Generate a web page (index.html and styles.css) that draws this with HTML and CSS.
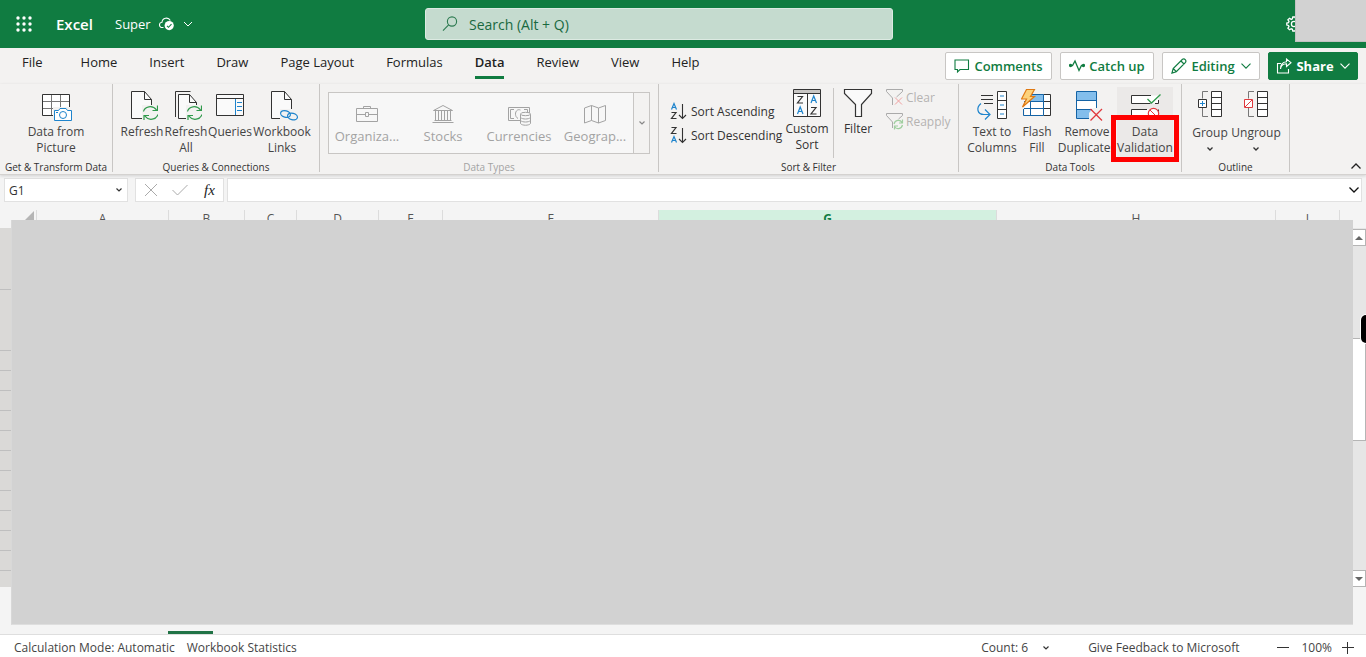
FILE: index.html
```html
<!DOCTYPE html>
<html lang="en">
<head>
<meta charset="utf-8">
<meta name="viewport" content="width=device-width, initial-scale=1">
<title>Excel</title>
<link rel="stylesheet" href="styles.css">
</head>
<body>
<div class="app">
  <header class="topbar">
    <button class="launcher" aria-label="App launcher">
      <svg width="16" height="16" viewBox="0 0 16 16" fill="#fff"><circle cx="2" cy="2" r="1.7"/><circle cx="8" cy="2" r="1.7"/><circle cx="14" cy="2" r="1.7"/><circle cx="2" cy="8" r="1.7"/><circle cx="8" cy="8" r="1.7"/><circle cx="14" cy="8" r="1.7"/><circle cx="2" cy="14" r="1.7"/><circle cx="8" cy="14" r="1.7"/><circle cx="14" cy="14" r="1.7"/></svg>
    </button>
    <span class="brand">Excel</span>
    <button class="doc">Super
      <svg width="16" height="16" viewBox="0 0 16 16" fill="none"><path d="M4.5 11.5H3.2A2.6 2.6 0 0 1 3 6.3 4.4 4.4 0 0 1 11.3 4.5" stroke="#fff" stroke-width="1.1"/><circle cx="10.2" cy="9.6" r="4.6" fill="#fff"/><path d="M8 9.8l1.5 1.5 3-3.2" stroke="#107c41" stroke-width="1.1"/></svg>
      <svg class="chev" width="10" height="6" viewBox="0 0 10 6" fill="none" stroke="#fff"><path d="M1 1l4 4 4-4"/></svg>
    </button>
    <label class="search">
      <svg width="16" height="16" viewBox="0 0 16 16" fill="none" stroke="#2c7a50" stroke-width="1.1"><circle cx="10" cy="5.5" r="4.6"/><path d="M6.6 8.9L1 14.6"/></svg>
      <input type="text" placeholder="Search (Alt + Q)" aria-label="Search">
    </label>
    <button class="gear" aria-label="Settings">
      <svg width="16" height="16" viewBox="0 0 16 16" fill="none" stroke="#fff" stroke-width="1.3"><path d="M6.8 1h2.4l.4 1.9 1.2.5 1.7-1.1 1.6 1.6L13 5.6l.5 1.2 1.7.4v2l-1.7.4-.5 1.3 1.1 1.6-1.6 1.6-1.7-1-1.2.4L9.200 15H6.800l-.4-1.800-1.200-.400-1.700 1-1.600-1.600L3 10.700l-.5-1.200L.8 9V7l1.700-.4L3 5.400 1.900 3.900l1.600-1.600 1.700 1.100 1.200-.5z"/><circle cx="8" cy="8" r="2.600"/></svg>
    </button>
    <div class="account-mask"></div>
  </header>

  <div class="tabrow">
    <nav class="tabs">
      <button class="tab file">File</button><button class="tab">Home</button><button class="tab">Insert</button><button class="tab">Draw</button><button class="tab">Page Layout</button><button class="tab">Formulas</button><button class="tab active">Data</button><button class="tab">Review</button><button class="tab">View</button><button class="tab">Help</button>
    </nav>
    <div class="actions">
      <button class="action comments"><svg width="16" height="16" viewBox="0 0 16 16" fill="none" stroke="#107c41" stroke-width="1.100"><path d="M1 2h13.500v9.500H6L3.500 14v-2.500H1z"/></svg>Comments</button>
      <button class="action catch"><svg width="16" height="16" viewBox="0 0 16 16" fill="none" stroke="#107c41" stroke-width="1.300"><path d="M1.500 7.500h2L6 3l4 9.500 2.500-5h2"/><circle cx="1.500" cy="7.500" r="1" fill="#107c41"/><circle cx="14.500" cy="7.500" r="1" fill="#107c41"/></svg>Catch up</button>
      <button class="action edit"><svg width="16" height="16" viewBox="0 0 16 16" fill="none" stroke="#107c41" stroke-width="1.200"><path d="M1 15l1.200-4.500L11.500 1.300c2-1.300 4.300 1 3 3L5.300 13.700z M2.200 10.500l3.100 3.200M10 3l3 3"/></svg>Editing<svg class="chev" width="10" height="6" viewBox="0 0 10 6" fill="none" stroke="#107c41" stroke-width="1.100"><path d="M.5 .7L5 5.200 9.500.7"/></svg></button>
      <button class="action share"><svg width="16" height="16" viewBox="0 0 16 16" fill="none" stroke="#fff" stroke-width="1.100"><path d="M5 5.500H1.500V15h11v-4M4.500 11c.4-3.500 2.600-5.200 6-5.300v2.800L15 4.700 10.500 1v2.700C6.500 4 4.500 6.500 4.500 11z"/></svg>Share<svg class="chev" width="10" height="6" viewBox="0 0 10 6" fill="none" stroke="#fff" stroke-width="1.100"><path d="M.5 .7L5 5.200 9.500.7"/></svg></button>
    </div>
  </div>

  <div class="ribbon">
    <section class="group g-get">
      <div class="cmds">
        <button class="cmd">
          <svg width="32" height="32" viewBox="0 0 32 32" fill="none"><path d="M2.500 5.500h27v21h-27z" fill="#fff"/><path d="M11.500 5.500v21M20.500 5.500v21M2.500 12.500h27M2.500 19.500h27" stroke="#777"/><path d="M2.500 5.500h27v21h-27z" stroke="#333"/><path d="M13 18h19v14H13z" fill="#f3f2f1"/><path d="M14.500 21.500h4l1.500-2h6l1.500 2h4v10h-17z" fill="#fff" stroke="#1e84cc"/><circle cx="23" cy="26" r="3.500" stroke="#1e84cc"/><path d="M16 23.500h2" stroke="#1e84cc"/></svg>
          <span>Data from<br>Picture</span></button>
      </div>
      <h2>Get &amp; Transform Data</h2>
    </section>

    <section class="group g-queries">
      <div class="cmds">
        <button class="cmd w44">
          <svg width="32" height="32" viewBox="0 0 32 32" fill="none"><path d="M5.500 2.500h13l7 8v19h-20z" fill="#fafafa" stroke="#333"/><path d="M18.500 2.500v8h7" stroke="#333"/><path d="M16 16h16v16H16z" fill="#f3f2f1"/><path d="M17.500 22.500c1-5 9-7 13-1.500M31.500 16.500V21.500h-5M32 25.500c-2 5-9 7-13 1.500M18 31v-4.500h5" stroke="#309a4c" stroke-width="1.200"/></svg>
          <span>Refresh</span></button>
        <button class="cmd w44">
          <svg width="32" height="32" viewBox="0 0 32 32" fill="none"><path d="M5.500 28V2.500h15" stroke="#333"/><path d="M8.500 5.500h11l7 8v16h-18z" fill="#fafafa" stroke="#333"/><path d="M19.500 5.500v8h7" stroke="#333"/><path d="M16 16h16v16H16z" fill="#f3f2f1"/><path d="M17.500 22.500c1-5 9-7 13-1.500M31.500 16.500V21.500h-5M32 25.500c-2 5-9 7-13 1.500M18 31v-4.500h5" stroke="#309a4c" stroke-width="1.200"/></svg>
          <span>Refresh<br>All</span></button>
        <button class="cmd w44">
          <svg width="32" height="32" viewBox="0 0 32 32" fill="none"><path d="M2.500 5.500h27v21h-27z" fill="#fafafa" stroke="#333"/><path d="M2.500 9.500h27" stroke="#333"/><path d="M21.500 10v16M23 13.500h5M23 17.500h5M23 21.500h5" stroke="#1e84cc"/></svg>
          <span>Queries</span></button>
        <button class="cmd w60">
          <svg width="32" height="32" viewBox="0 0 32 32" fill="none"><path d="M5.500 2.500h13l7 8v19h-20z" fill="#fafafa" stroke="#333"/><path d="M18.500 2.500v8h7" stroke="#333"/><path d="M14 20h18v12H14z" fill="#f3f2f1"/><g stroke="#1e84cc" stroke-width="1.200"><ellipse cx="19.500" cy="25" rx="5" ry="3.200" transform="rotate(15 19.500 25)"/><ellipse cx="26.500" cy="27.500" rx="5" ry="3.200" transform="rotate(15 26.500 27.500)"/></g></svg>
          <span>Workbook<br>Links</span></button>
      </div>
      <h2>Queries &amp; Connections</h2>
    </section>

    <section class="group g-types">
      <div class="gallery">
        <button class="type" disabled><svg width="24" height="24" viewBox="0 0 24 24" fill="none" stroke="#a3a3a3"><path d="M1.500 5.500h21v13h-21zM8.500 5.500v-2h7v2M1.500 11.500h9M13.500 11.500h9M10.500 9.500h3v4h-3z"/></svg>Organiza...</button>
        <button class="type" disabled><svg width="24" height="24" viewBox="0 0 24 24" fill="none" stroke="#a3a3a3"><path d="M2.500 7.500L12 2.500l9.500 5zM3.500 17.500h17M1.500 19.500h21M4.500 8v9M7.500 8v9M10.500 8v9M13.500 8v9M16.500 8v9M19.500 8v9"/></svg>Stocks</button>
        <button class="type" disabled><svg width="24" height="24" viewBox="0 0 24 24" fill="none" stroke="#a3a3a3"><path d="M1.500 4.500h21v13h-21zM7 6.500H3.500v9H7M17 6.500h3.500V9M13.500 7c-5-2-7 6-2.500 8.500"/><path d="M13.500 11v9.500c1.500 2.300 8.500 2.300 10 0V11" fill="#f7f7f7"/><ellipse cx="18.500" cy="11" rx="5" ry="1.700" fill="#f7f7f7"/><path d="M13.500 14.500c2 2 8 2 10 0M13.500 17.500c2 2 8 2 10 0"/></svg>Currencies</button>
        <button class="type" disabled><svg width="24" height="24" viewBox="0 0 24 24" fill="none" stroke="#a3a3a3"><path d="M1.500 5L8.500 2.500l7 2.500 7-2.500v15l-7 2.500-7-2.500-7 2.500zM8.500 2.500v15M15.500 5v15"/></svg>Geograp...</button>
        <button class="more" disabled aria-label="More data types"><svg width="6" height="4" viewBox="0 0 6 4" fill="none" stroke="#888" stroke-width="1.200"><path d="M.5.5L3 3 5.500.5"/></svg></button>
      </div>
      <h2 class="dim">Data Types</h2>
    </section>

    <section class="group g-sort">
      <div class="cmds">
        <div class="sorts">
          <button class="row"><svg width="18" height="18" viewBox="0 0 18 18" fill="none" stroke-width="1.200"><path d="M1.500 7.500l2.500-6 2.500 6M2.300 5.500h3.400" stroke="#1e84cc"/><path d="M1.500 10.500h4.500L1.500 16.500h5" stroke="#333"/><path d="M12.500 2v14.500M9 13l3.500 3.500L16 13" stroke="#333" stroke-width="1.100"/></svg>Sort Ascending</button>
          <button class="row"><svg width="18" height="18" viewBox="0 0 18 18" fill="none" stroke-width="1.200"><path d="M1.500 1.500h4.500L1.500 7.500h5" stroke="#333"/><path d="M1.500 16.500l2.500-6 2.500 6M2.300 14.500h3.400" stroke="#1e84cc"/><path d="M12.500 2v14.500M9 13l3.500 3.500L16 13" stroke="#333" stroke-width="1.100"/></svg>Sort Descending</button>
        </div>
        <button class="cmd high custom">
          <svg width="32" height="32" viewBox="0 0 32 32" fill="none"><path d="M2.500 3.500h27v27h-27z" fill="#fafafa" stroke="#333"/><path d="M3 4h26v3.500H3z" fill="#c8c6c4"/><path d="M2.500 7.500h27M16.500 8v22" stroke="#333"/><g stroke-width="1.200"><path d="M6.500 10.500h5L6.500 17h5.500M20 21.500h5L20 28h5.500" stroke="#333"/><path d="M6.500 28l2.700-7 2.800 7M7.500 25.500h3.500M20 17l2.700-7 2.800 7M21 14.500h3.500" stroke="#1e84cc"/></g></svg>
          <span>Custom<br>Sort</span></button>
        <div class="rule"></div>
        <button class="cmd high filter">
          <svg width="32" height="32" viewBox="0 0 32 32" fill="none"><path d="M2.500 3.500h27v4L19.500 18.500v12h-6v-12L2.500 7.500z" fill="#fafafa" stroke="#333" stroke-width="1.200"/></svg>
          <span>Filter</span></button>
        <div class="clears">
          <button class="row" disabled><svg width="18" height="18" viewBox="0 0 18 18" fill="none"><path d="M.5 1.500h16v2L10.500 9M6.500 17V10L.5 3.500v-2" stroke="#aaa"/><path d="M9 9.500l7 7M16 9.500l-7 7" stroke="#f1a0a0"/></svg>Clear</button>
          <button class="row" disabled><svg width="18" height="18" viewBox="0 0 18 18" fill="none"><path d="M.5 1.500h16v2L12.500 7M6.500 16V10L.5 3.500v-2" stroke="#aaa"/><path d="M8 12c1-4 6-5 8-1.500M16.500 7.500v3.500h-3.500M16.500 13c-1 4-6 5-8 1.500M8.500 17.500V14H12" stroke="#9fce9f" stroke-width="1.200"/></svg>Reapply</button>
        </div>
      </div>
      <h2>Sort &amp; Filter</h2>
    </section>

    <section class="group g-tools">
      <div class="cmds">
        <button class="cmd w50">
          <svg width="32" height="32" viewBox="0 0 32 32" fill="none"><path d="M5 6.500h12M5 10.500h12M8 14.500h9" stroke="#333"/><path d="M21.500 2.500h9v27h-9z" fill="#fff" stroke="#333"/><path d="M21.500 11.500h9M21.500 20.500h9" stroke="#333"/><path d="M24 7h4M24 16h4M24 25h4M5 14.500c-5 4-4 11 3 11h5M9 20.500l5 5-5 5" stroke="#1e84cc" stroke-width="1.200"/></svg>
          <span>Text to<br>Columns</span></button>
        <button class="cmd w40">
          <svg width="32" height="32" viewBox="0 0 32 32" fill="none"><path d="M3.500 5.500h26v21h-26z" fill="#fff"/><path d="M10 5.500h12v7H8z" fill="#83beec"/><path d="M22.500 5.500h7v21h-7M22.500 12.500h7M22.500 19.500h7" stroke="#333"/><path d="M2.500 26.500h20v-21h-13M3 19.500h19.500M3 12.500h19.500M9.500 13v13.500M2.500 20v6.500" stroke="#1463a5"/><path d="M5.500.5h8l-4 7h4L1.500 18l4-8h-5z" fill="#fcd27c" stroke="#e07912" stroke-width="1.200"/></svg>
          <span>Flash<br>Fill</span></button>
        <button class="cmd w60">
          <svg width="32" height="32" viewBox="0 0 32 32" fill="none"><path d="M5.500 2.500h20v27h-20z" fill="#fff" stroke="#1463a5"/><path d="M6 3h19v8H6zM6 21h19v8H6z" fill="#83beec"/><path d="M5.500 11.500h20M5.500 20.500h20" stroke="#1463a5"/><path d="M22 19h10v13H18v-8z" fill="#f3f2f1"/><path d="M19.500 20L31 31.500M31 20L19.500 31.500" stroke="#e0393e" stroke-width="1.300"/></svg>
          <span>Remove<br>Duplicates</span></button>
        <button class="cmd hovered">
          <svg width="32" height="32" viewBox="0 0 32 32" fill="none"><path d="M2.500 6.500h27v8h-27zM2.500 20.500h27v8h-27z" fill="#fff"/><path d="M22 6.500H2.500v8h19M26 14.500h3.500V11M18 20.500H2.500v8h16M29.500 20.500v8" stroke="#333"/><path d="M18.500 10l4 4L31.500 5.500" stroke="#309a4c" stroke-width="1.300"/><circle cx="24.500" cy="24.500" r="5.200" fill="#fff" stroke="#e0393e" stroke-width="1.200"/><path d="M21 21l7 7" stroke="#e0393e"/></svg>
          <span>Data<br>Validation</span>
          <i class="callout"></i></button>
      </div>
      <h2>Data Tools</h2>
    </section>

    <section class="group g-outline">
      <div class="cmds">
        <button class="cmd low w46">
          <svg width="32" height="32" viewBox="0 0 32 32" fill="none"><path d="M17.500 2.500h10v25h-10z" fill="#fff" stroke="#333"/><path d="M17.500 8.500h10M17.500 14.500h10M17.500 20.500h10" stroke="#333"/><path d="M14 2.500H8.500v7M8.500 19v8.500H14" stroke="#777"/><path d="M4.500 10.500h8v8h-8z" fill="#fff" stroke="#333"/><path d="M6 14.500h5M8.500 12v5" stroke="#1e84cc"/></svg>
          <span>Group</span><svg class="down" width="6" height="4" viewBox="0 0 6 4" fill="none" stroke="#333" stroke-width="1.300"><path d="M.5.5L3 3 5.500.5"/></svg></button>
        <button class="cmd low w46">
          <svg width="32" height="32" viewBox="0 0 32 32" fill="none"><path d="M17.500 2.500h10v25h-10z" fill="#fff" stroke="#333"/><path d="M17.500 8.500h10M17.500 14.500h10M17.500 20.500h10" stroke="#333"/><path d="M14 2.500H8.500v7M8.500 19v8.500H14" stroke="#777"/><path d="M4.500 10.500h8v8h-8z" fill="#fff" stroke="#e0393e"/><path d="M5 18l7-7" stroke="#e0393e"/></svg>
          <span>Ungroup</span><svg class="down" width="6" height="4" viewBox="0 0 6 4" fill="none" stroke="#333" stroke-width="1.300"><path d="M.5.5L3 3 5.500.5"/></svg></button>
      </div>
      <h2>Outline</h2>
    </section>
    <button class="collapse" aria-label="Collapse ribbon"><svg width="10" height="6" viewBox="0 0 10 6" fill="none" stroke="#222" stroke-width="1.300"><path d="M.5 5.500L5 1l4.500 4.500"/></svg></button>
  </div>

  <div class="formula">
    <div class="namebox"><input type="text" value="G1" aria-label="Name box"><svg width="6" height="4" viewBox="0 0 6 4" fill="none" stroke="#333" stroke-width="1.200"><path d="M.5.5L3 3 5.500.5"/></svg></div>
    <div class="fx">
      <button aria-label="Cancel"><svg width="16" height="14" viewBox="0 0 16 14" fill="none" stroke="#aaa"><path d="M2 1l12 12M14 1L2 13"/></svg></button>
      <button aria-label="Enter"><svg width="16" height="14" viewBox="0 0 16 14" fill="none" stroke="#aaa"><path d="M.5 7l5 5L15.500 2"/></svg></button>
      <button class="fn" aria-label="Insert function">fx</button>
    </div>
    <div class="bar"><input type="text" aria-label="Formula bar"><svg width="10" height="6" viewBox="0 0 10 6" fill="none" stroke="#111" stroke-width="1.300"><path d="M.5.5L5 5 9.500.5"/></svg></div>
  </div>

  <main class="sheet">
    <div class="cols">
      <div class="corner"><svg width="10" height="10" viewBox="0 0 10 10"><path d="M10 0v10H0z" fill="#b5b5b5"/></svg></div>
      <div class="col a">A</div><div class="col b">B</div><div class="col c">C</div><div class="col d">D</div><div class="col e">E</div><div class="col f">F</div><div class="col g">G</div><div class="col h">H</div><div class="col i">I</div>
    </div>
    <div class="body">
      <div class="rows"><i class="first"></i><i class="tall"></i><i></i><i></i><i></i><i></i><i></i><i></i><i></i><i></i><i></i><i></i><i></i></div>
      <div class="scroll">
        <button aria-label="Scroll up"><svg width="8" height="4" viewBox="0 0 8 4" fill="#666"><path d="M0 4l4-4 4 4z"/></svg></button>
        <div class="track"><div class="thumb"></div></div>
        <button aria-label="Scroll down"><svg width="8" height="4" viewBox="0 0 8 4" fill="#666"><path d="M0 0l4 4 4-4z"/></svg></button>
      </div>
    </div>
    <div class="sheettabs"><div class="marker"></div></div>
    <div class="mask"></div>
    <div class="handle"></div>
  </main>

  <footer class="status">
    <button>Calculation Mode: Automatic</button>
    <button class="stats">Workbook Statistics</button>
    <button class="count">Count: 6<svg width="6" height="4" viewBox="0 0 6 4" fill="none" stroke="#333" stroke-width="1.200"><path d="M.5.5L3 3 5.500.5"/></svg></button>
    <button class="feedback">Give Feedback to Microsoft</button>
    <button class="zoom" aria-label="Zoom out"><svg width="12" height="12" viewBox="0 0 12 12" stroke="#333"><path d="M0 5.500h12"/></svg></button>
    <button class="level">100%</button>
    <button class="zoom" aria-label="Zoom in"><svg width="12" height="12" viewBox="0 0 12 12" stroke="#333"><path d="M0 5.500h12M5.500 0v12"/></svg></button>
  </footer>
</div>
</body>
</html>
```
FILE: styles.css
```css
* { box-sizing: border-box; }
body { margin: 0; font-family: "Open Sans", "Noto Sans", sans-serif; font-size: 12px; color: #333; background: #f4f4f4; }
button { border: 0; padding: 0; margin: 0; background: none; font: inherit; color: inherit; white-space: nowrap; }
input { border: 0; padding: 0; margin: 0; background: none; font: inherit; color: inherit; outline: 0; min-width: 0; }
svg { display: block; flex: none; }
.app { min-height: 100vh; display: flex; flex-direction: column; overflow: hidden; }

.topbar { position: relative; display: flex; align-items: center; height: 48px; padding-left: 16px; background: #107c41; color: #fff; }
.launcher { width: 16px; margin-right: 24px; }
.brand { width: 59px; font-size: 15px; font-weight: 600; }
.doc { display: flex; align-items: center; gap: 8px; font-size: 13px; }
.search { position: absolute; left: 50%; top: 8px; width: 468px; height: 32px; margin-left: -258px; display: flex; align-items: center; gap: 11px; padding-left: 16px; background: #c5dbcf; border: 1px solid #dceae2; border-radius: 3px; color: #19693f; font-size: 14px; }
.search input { flex: 1; }
.search input::placeholder { color: #19693f; opacity: 1; }
.gear { margin-left: auto; margin-right: 64px; }
.account-mask { position: absolute; right: 0; top: 0; width: 71px; height: 42px; background: #d2d2d2; border-left: 1px solid #c2c2c2; border-bottom: 1px solid #c2c2c2; }

.tabrow { display: flex; justify-content: space-between; height: 36px; padding-right: 8px; background: #f3f2f1; }
.tabs { display: flex; gap: 32px; padding-left: 22px; font-size: 13px; color: #222; }
.tab { height: 31px; border-bottom: 3px solid transparent; line-height: 30px; display: flex; align-items: center; }
.file { margin-right: 6px; }
.active { font-weight: 600; border-color: #107c41; }
.actions { display: flex; gap: 8px; padding: 4px 0; }
.action { display: flex; align-items: center; justify-content: center; gap: 4px; height: 28px; background: #fff; border: 1px solid #c8c6c4; border-radius: 2px; color: #107c41; font-size: 13px; font-weight: 600; }
.comments { width: 107px; }
.catch { width: 94px; }
.edit { width: 98px; }
.share { width: 90px; background: #107c41; border-color: #107c41; color: #fff; font-weight: 700; }
.action .chev { margin-left: 2px; }

.ribbon { position: relative; z-index: 1; display: flex; height: 91px; background: #f3f2f1; border-bottom: 1px solid #d4d2d0; box-shadow: 0 1px 3px rgba(0, 0, 0, 0.15); }
.group { display: flex; flex-direction: column; height: 88px; border-right: 1px solid #c8c6c4; }
.group h2 { margin: auto 0 0; font-size: 10px; font-weight: 400; line-height: 10px; text-align: center; white-space: nowrap; color: #333; }
.group h2.dim { color: #a3a3a3; }
.cmds { display: flex; padding-top: 3px; height: 74px; }
.cmd { position: relative; display: flex; flex-direction: column; align-items: center; gap: 3px; padding-top: 2px; line-height: 16px; color: #444; }
.w40 { width: 40px; }
.w44 { width: 44px; }
.w46 { width: 46px; }
.w50 { width: 50px; }
.w60 { width: 60px; }
.g-get { width: 113px; }
.g-get .cmds { justify-content: center; }
.g-queries { width: 207px; }
.g-queries .cmds { padding-left: 7px; }
.g-types { width: 339px; }
.g-sort { width: 300px; }
.g-tools { width: 223px; }
.g-outline { width: 108px; }
.gallery { display: flex; height: 62px; margin: 8px 8px 0; background: #f7f7f7; border: 1px solid #c8c6c4; }
.type { flex: 1; width: 0; display: flex; flex-direction: column; align-items: center; padding-top: 10px; font-size: 13px; line-height: 18px; color: #a3a3a3; }
.more { width: 16px; display: grid; place-items: center; background: #f3f2f1; border-left: 1px solid #c8c6c4; }
.row { display: flex; align-items: center; gap: 3px; height: 24px; color: #333; }
.row:disabled { color: #b5b3b1; gap: 2px; }
.sorts { width: 113px; margin-left: 11px; padding-top: 12px; }
.high { padding-top: 0; margin-top: -1px; }
.custom { width: 48px; color: #333; }
.rule { width: 1px; height: 70px; margin: 1px 0 0 2px; background: #c8c6c4; }
.filter { width: 48px; color: #333; }
.clears { margin: -2px 0 0 4px; }
.g-tools .cmds { padding-left: 8px; }
.hovered { width: 56px; height: 71px; background: #ebe9e8; }
.callout { position: absolute; left: -6px; top: 28px; width: 68px; height: 47px; border: 5px solid #f00; }
.g-outline .cmds { padding-left: 5px; }
.low { gap: 4px; }
.low .down { margin-top: 2px; }
.collapse { margin: auto 5px 5px auto; }

.formula { display: flex; height: 35px; padding: 3px 4px 8px; }
.namebox, .fx, .bar { display: flex; align-items: center; height: 24px; background: #fff; border: 1px solid #e1e1e1; }
.namebox { width: 124px; padding: 0 5px 0 4px; margin-right: 7px; }
.namebox input { flex: 1; }
.fx { width: 89px; margin-right: 3px; padding-left: 7px; gap: 13px; }
.fn { padding-left: 3px; font-family: "Liberation Serif", serif; font-style: italic; font-size: 15px; line-height: 20px; color: #222; }
.bar { flex: 1; padding-right: 2px; }
.bar input { flex: 1; }

.sheet { position: relative; flex: 1; display: flex; flex-direction: column; }
.cols { display: flex; height: 18px; overflow: hidden; color: #555; font-size: 12px; line-height: 17px; }
.corner { width: 37px; padding: 1px 2px 0 0; border-right: 1px solid #dcdcdc; display: flex; justify-content: flex-end; }
.col { flex: none; border-right: 1px solid #dcdcdc; text-align: center; }
.a { width: 132px; }
.b { width: 76px; }
.c { width: 52px; }
.d { width: 82px; }
.e { width: 64px; }
.f { width: 216px; }
.g { width: 338px; background: #d3f0e0; color: #107c41; font-weight: 700; }
.h { width: 279px; }
.i { width: 64px; }
.body { flex: 1; display: flex; justify-content: space-between; background: #e6e6e6; }
.rows { width: 11px; overflow: hidden; background: #dad9d7; }
.rows i { display: block; height: 20px; border-bottom: 1px solid #bfbfbf; }
.rows .first { height: 62px; }
.rows .tall { height: 61px; }
.scroll { width: 14px; display: flex; flex-direction: column; padding-top: 1px; }
.scroll button { height: 17px; display: grid; place-items: center; background: #fff; border: 1px solid #b5b5b5; }
.track { flex: 1; padding-top: 92px; }
.thumb { height: 103px; background: #fff; border: 1px solid #b5b5b5; }
.sheettabs { height: 48px; display: flex; align-items: flex-end; border-bottom: 1px solid #dedede; }
.marker { width: 45px; height: 3px; margin-left: 168px; background: #217346; }
.mask { position: absolute; inset: 10px 13px 10px 11px; background: #d2d2d2; border-bottom: 1px solid #dedede; border-left: 1px solid #d8d8d8; }
.handle { position: absolute; right: 0; top: 105px; width: 5px; height: 28px; background: #000; border-radius: 5px 0 0 5px; box-shadow: 0 0 0 1px #fff; }

.status { display: flex; align-items: center; height: 22px; padding: 3px 12px 0 14px; background: #fff; color: #444; line-height: 18px; }
.status .stats { margin-left: 12px; }
.status .count { display: flex; align-items: center; gap: 15px; margin-left: auto; }
.status .feedback { margin-left: 39px; }
.status .zoom { margin-left: 38px; }
.status .level { margin-left: 12px; }
.status .level + .zoom { margin-left: 10px; }
```
